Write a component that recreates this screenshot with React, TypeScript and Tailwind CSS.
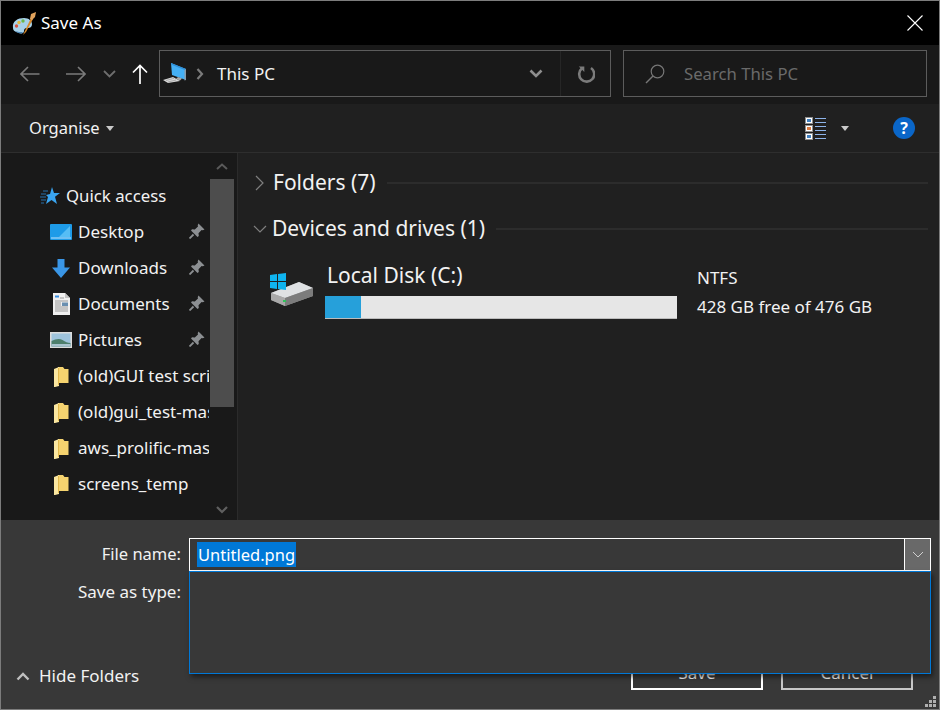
import React from "react";

const Palette = () => (
  <svg width="24" height="24" viewBox="0 0 24 24">
    <path d="M1 17C0 10 6 7 12 7c5 0 8 3 8 6 0 4-3 4-5 4-2 0-3 1-3 3 0 2-2 3-5 2-3-1-6-2-6-5z" fill="#a8d2ea" />
    <path d="M3 20c3 2 6 4 8 1-3 0-5 0-8-1z" fill="#4d87b5" />
    <circle cx="4.500" cy="15" r="1.700" fill="#d9533f" />
    <circle cx="7" cy="11.500" r="1.700" fill="#e2b93f" />
    <circle cx="11" cy="10" r="1.700" fill="#6cb84a" />
    <path d="M11 24l8-17 2 1-7 13z" fill="#d98a2c" />
    <path d="M18 8l1-5 5-2-1 5-3 3z" fill="#e2a35c" />
  </svg>
);

const Computer = () => (
  <svg width="26" height="24" viewBox="0 0 26 24">
    <path d="M8 1l15 6v11L9 13z" fill="#45b0f5" />
    <path d="M8 1l15 6v1.500L8 2.500z" fill="#2f8fd8" />
    <path d="M23 7v11l-1.500.5V8z" fill="#8a9aa8" />
    <path d="M15 15l4 1.500-2 2-4-1.500z" fill="#a8a8a8" />
    <path d="M0 18l10-3 7 4-12 2z" fill="#d8d8d8" />
    <path d="M3 18.500l8-2.200M5 20l8-2" stroke="#8a8a8a" strokeWidth=".6" />
  </svg>
);

const Pin = () => (
  <svg width="16" height="16" viewBox="0 0 16 16">
    <path d="M9.500 0.500L15.500 6.500L13.800 7.300L12.600 7L9.500 10.200L9.800 13L8.500 14L2 7.500L3 6.200L5.800 6.500L9 3.400L8.700 2.200z" fill="#8c8f92" />
    <path d="M4.500 11.500L0.500 15.500" stroke="#8c8f92" strokeWidth="1.800" />
  </svg>
);

const Star = () => (
  <svg width="20" height="18" viewBox="0 0 20 18">
    <path d="M12 0l2 6h6l-5 3.800 2 7.200-5.500-4-5.500 4 2-7-2-2 4-1z" fill="#3aa5f0" />
    <path d="M3 4h5M1 7h5M0 10h6M1 13h5M1 16h3" stroke="#2a85d0" strokeWidth=".8" />
  </svg>
);

const Desktop = () => (
  <svg width="22" height="16" viewBox="0 0 22 16">
    <rect width="22" height="16" rx="1" fill="#1e9be8" />
    <path d="M9 13L20 2v11z" fill="#56bdf5" />
    <rect x="1" y="13.500" width="20" height="1" fill="#bfe4fb" />
  </svg>
);

const Download = () => (
  <svg width="18" height="19" viewBox="0 0 18 19">
    <path d="M5.500 0h7v8.500H18L9 19 0 8.500h5.500z" fill="#3a96e6" />
  </svg>
);

const Doc = () => (
  <svg width="17" height="22" viewBox="0 0 17 22">
    <path d="M0 0h12l5 5v17H0z" fill="#f0f0f0" />
    <path d="M12 0l5 5h-5z" fill="#c2c2c2" />
    <path d="M2 3.500h4" stroke="#3a8fe0" strokeWidth="2" />
    <path d="M7 5h4M2 8h13M2 10h6M2 12h6M2 14h13M2 16h13M2 18h13" stroke="#9a9a9a" strokeWidth="1" />
    <rect x="9" y="9.500" width="6" height="3.500" fill="#6a8fb0" />
  </svg>
);

const Pic = () => (
  <svg width="22" height="16" viewBox="0 0 22 16">
    <rect width="22" height="16" fill="#dcdcdc" />
    <rect x="1.500" y="1.500" width="19" height="13" fill="#9ec3dc" />
    <path d="M1.500 9c4-2 8-3 11-1 3 2 5 3 8 3v3.500h-19z" fill="#4d7f6c" />
    <rect x="1.500" y="12" width="19" height="2.500" fill="#a9c4cf" />
  </svg>
);

const Folder = () => (
  <svg width="15" height="21" viewBox="0 0 15 21">
    <path d="M4 1h5l1.500 2H14.500v14H4z" fill="#f5d36f" />
    <path d="M0 3l5-2v19l-4 1H0z" fill="#fbe7a0" />
    <path d="M4.500 2v17" stroke="#e2b84a" strokeWidth="1" />
  </svg>
);

const Disk = () => (
  <svg width="46" height="36" viewBox="0 0 46 36">
    <path d="M2 22L30 11l14 6v8L16 35 2 29z" fill="#9a9a9a" />
    <path d="M2 22L30 11l14 6-28 10z" fill="#dfe1e3" />
    <path d="M2 22l14 5v8L2 29z" fill="#a9a9a9" />
    <path d="M16 27l28-10v8L16 35z" fill="#7c7c7c" />
    <rect x="14" y="29" width="3" height="2" fill="#2fc25a" />
    <path d="M1 4l7-1v7H1zM9 3l8-1v8H9zM1 11h7v7l-7-1zM9 11h8v8l-8-1z" fill="#0fb4f0" />
  </svg>
);

const ViewIcon = () => {
  const colors = ["#3f7fc0", "#d9793f", "#3f7fc0"];
  return (
    <svg width="21" height="23" viewBox="0 0 21 23">
      {colors.map((c, i) => (
        <g key={i} transform={`translate(0 ${i * 8})`}>
          <rect x=".500" y=".500" width="7" height="6" fill="#fff" stroke="#8e8e8e" />
          <rect x="2" y="2" width="4" height="3" fill={c} />
          <path d="M10 1.500h11M10 5.500h11" stroke="#8db4ea" strokeWidth="1" />
        </g>
      ))}
    </svg>
  );
};

const Caret = () => (
  <svg width="8" height="5" viewBox="0 0 8 5" className="shrink-0">
    <path d="M0 0h8L4 5z" fill="#c9c9c9" />
  </svg>
);

const SideRow = ({ icon, label, pin }: { icon: React.ReactNode; label: string; pin?: boolean }) => (
  <div className="h-9 flex items-center relative">
    <div className="w-[24px] ml-[48px] flex justify-center shrink-0">{icon}</div>
    <span className="ml-[5px] whitespace-nowrap text-[#f2f2f2]">{label}</span>
    {pin && (
      <div className="absolute left-[188px] top-[9px] bg-[#191919]">
        <Pin />
      </div>
    )}
  </div>
);

export default function App() {
  return (
    <div
      className="w-[940px] h-[710px] border border-[#7c7c7c] bg-[#202020] flex flex-col relative overflow-hidden text-white text-[17px]"
      style={{ fontFamily: '"Noto Sans", sans-serif' }}
    >
      {/* title */}
      <div className="h-[44px] bg-black flex items-center shrink-0 pl-[11px] pr-[16px]">
        <Palette />
        <span className="ml-[5px] text-white">Save As</span>
        <svg width="16" height="16" viewBox="0 0 16 16" className="ml-auto">
          <path d="M.5.500l15 15M15.500.500l-15 15" stroke="#fff" strokeWidth="1.100" />
        </svg>
      </div>

      {/* nav */}
      <div className="h-[59px] bg-[#191919] flex items-center shrink-0 pl-[19px] pb-[2px]">
        <svg width="20" height="16" viewBox="0 0 20 16">
          <path d="M19.500 8H1M8 1L1 8l7 7" stroke="#7b7b7b" strokeWidth="1.600" fill="none" />
        </svg>
        <svg width="20" height="16" viewBox="0 0 20 16" className="ml-[26px]">
          <path d="M0 8h18.500M12 1l7 7-7 7" stroke="#7b7b7b" strokeWidth="1.600" fill="none" />
        </svg>
        <svg width="13" height="8" viewBox="0 0 13 8" className="ml-[17px]">
          <path d="M1 1l5.500 5.500L12 1" stroke="#6e6e6e" strokeWidth="1.800" fill="none" />
        </svg>
        <svg width="16" height="20" viewBox="0 0 16 20" className="ml-[16px]">
          <path d="M8 20V1.500M1 8.500l7-7 7 7" stroke="#fff" strokeWidth="1.700" fill="none" />
        </svg>
        <div className="ml-[11px] w-[452px] h-[47px] border border-[#5c5c5c] flex items-center shrink-0">
          <div className="ml-[3px]">
            <Computer />
          </div>
          <svg width="8" height="12" viewBox="0 0 8 12" className="ml-[7px]">
            <path d="M1.500 1l4.500 5-4.500 5" stroke="#7b7b7b" strokeWidth="2.200" fill="none" />
          </svg>
          <span className="ml-[13px] text-[#f2f2f2]">This PC</span>
          <svg width="14" height="9" viewBox="0 0 14 9" className="ml-auto">
            <path d="M1.500 1.500L7 7l5.500-5.500" stroke="#8e8e8e" strokeWidth="2.600" fill="none" />
          </svg>
          <div className="ml-[17px] w-[50px] h-full border-l border-[#262626] flex items-center justify-center">
            <svg width="18" height="18" viewBox="0 0 18 18">
              <path d="M5 3.300A7.500 7.500 0 1 0 14 3" stroke="#7b7b7b" strokeWidth="2.600" fill="none" />
              <path d="M1.800 1.500h5.500V7z" fill="#7b7b7b" />
            </svg>
          </div>
        </div>
        <div className="ml-[12px] w-[304px] h-[47px] border border-[#5c5c5c] flex items-center shrink-0">
          <svg width="20" height="20" viewBox="0 0 20 20" className="ml-[21px]">
            <circle cx="12.500" cy="7.500" r="6.300" stroke="#777" strokeWidth="1.200" fill="none" />
            <path d="M8 12L1 19" stroke="#777" strokeWidth="1.400" />
          </svg>
          <span className="ml-[19px] text-[#6a6a6a] text-[16.700px]">Search This PC</span>
        </div>
      </div>

      {/* toolbar */}
      <div className="h-[48px] bg-[#202020] border-b border-[#2e2e2e] flex items-center shrink-0 pl-[28px] box-content">
        <span className="text-[#f2f2f2] text-[16.500px]">Organise</span>
        <div className="ml-[6px]">
          <Caret />
        </div>
        <div className="ml-auto flex items-center pr-[24px]">
          <ViewIcon />
          <div className="ml-[15px]">
            <Caret />
          </div>
          <div className="ml-[44px] w-[22px] h-[22px] rounded-full bg-[#0a66c8] flex items-center justify-center text-[16px] font-bold text-white leading-none">
            ?
          </div>
        </div>
      </div>

      {/* body */}
      <div className="flex-1 flex min-h-0">
        <div className="w-[237px] bg-[#191919] border-r border-[#2b2b2b] flex shrink-0">
          <div className="w-[208px] mr-[1px] overflow-hidden pt-[25px] relative shrink-0 text-[#f2f2f2]">
            <div className="h-9 flex items-center ml-[39px]">
              <Star />
              <span className="ml-[6px] whitespace-nowrap text-[16.800px]">Quick access</span>
            </div>
            <SideRow icon={<Desktop />} label="Desktop" pin />
            <SideRow icon={<Download />} label="Downloads" pin />
            <SideRow icon={<Doc />} label="Documents" pin />
            <SideRow icon={<Pic />} label="Pictures" pin />
            <SideRow icon={<Folder />} label="(old)GUI test scripts" />
            <SideRow icon={<Folder />} label="(old)gui_test-master" />
            <SideRow icon={<Folder />} label="aws_prolific-master" />
            <SideRow icon={<Folder />} label="screens_temp" />
          </div>
          <div className="w-[24px] flex flex-col items-center shrink-0">
            <div className="h-[26px] w-full flex items-center justify-center">
              <svg width="12" height="7" viewBox="0 0 12 7">
                <path d="M1 6l5-4.500L11 6" stroke="#5a5a5a" strokeWidth="2" fill="none" />
              </svg>
            </div>
            <div className="h-[228px] w-full bg-[#4d4d4d]" />
            <div className="flex-1 flex items-end pb-[6px]">
              <svg width="12" height="8" viewBox="0 0 12 8">
                <path d="M1 1l5 5 5-5" stroke="#5f5f5f" strokeWidth="2.200" fill="none" />
              </svg>
            </div>
          </div>
        </div>

        <div className="flex-1 bg-[#202020] pl-[15px] pr-[11px] pt-[13px] text-[#f2f2f2]">
          <div className="h-[34px] flex items-center">
            <svg width="9" height="16" viewBox="0 0 9 16" className="ml-[2px]">
              <path d="M1 1l7 7-7 7" stroke="#7f7f7f" strokeWidth="1.200" fill="none" />
            </svg>
            <span className="ml-[9px] text-[21px] leading-[30px] -mt-[2px]">Folders (7)</span>
            <div className="ml-[11px] flex-1 h-[2px] bg-[#2c2c2c]" />
          </div>
          <div className="h-[34px] mt-[12px] flex items-center">
            <svg width="14" height="8" viewBox="0 0 14 8" className="shrink-0">
              <path d="M1 1l6 6 6-6" stroke="#7f7f7f" strokeWidth="1.200" fill="none" />
            </svg>
            <span className="ml-[5px] text-[21px] leading-[30px] -mt-[2px] whitespace-nowrap">Devices and drives (1)</span>
            <div className="ml-[11px] flex-1 h-[2px] bg-[#2c2c2c]" />
          </div>
          <div className="flex mt-[14px] ml-[16px]">
            <div className="pt-[11px] w-[56px] shrink-0">
              <Disk />
            </div>
            <div className="w-[352px] shrink-0">
              <div className="text-[21px] h-[36px] leading-[31px] pl-[2px]">Local Disk (C:)</div>
              <div className="h-[23px] bg-[#e6e6e6] border-b border-[#bcbcbc] flex">
                <div className="w-[36px] h-full bg-[#26a0da]" />
              </div>
            </div>
            <div className="ml-[20px] pt-[3px] leading-[29px] whitespace-nowrap">
              <div>NTFS</div>
              <div>428 GB free of 476 GB</div>
            </div>
          </div>
        </div>
      </div>

      {/* footer */}
      <div className="h-[189px] bg-[#383838] shrink-0 flex flex-col pt-[18px] pb-[19px] text-[#f2f2f2]">
        <div className="flex items-center h-[33px]">
          <span className="w-[180px] text-right text-[16.500px]">File name:</span>
          <div className="ml-[8px] w-[742px] h-[33px] border border-white flex items-center pl-[7px]">
            <span className="bg-[#0078d7] text-white h-[25px] leading-[25px] px-[1px] text-[16.500px]">Untitled.png</span>
            <div className="ml-auto w-[26px] h-full bg-[#696969] border-l border-white flex items-center justify-center">
              <svg width="12" height="7" viewBox="0 0 12 7">
                <path d="M1 1l5 5 5-5" stroke="#cfcfcf" strokeWidth="1" fill="none" />
              </svg>
            </div>
          </div>
        </div>
        <div className="h-[42px] flex items-center">
          <span className="w-[180px] text-right">Save as type:</span>
        </div>
        <div className="mt-auto flex items-end pl-[15px] pr-[26px]">
          <div className="flex items-center h-[28px]">
            <svg width="14" height="9" viewBox="0 0 14 9">
              <path d="M1.500 7.500L7 2l5.500 5.500" stroke="#c0c0c0" strokeWidth="2.400" fill="none" />
            </svg>
            <span className="ml-[9px]">Hide Folders</span>
          </div>
          <div className="ml-auto flex gap-[18px]">
            <div className="w-[132px] h-[34px] border-2 border-white flex items-center justify-center">Save</div>
            <div className="w-[132px] h-[34px] border-2 border-[#c8c8c8] flex items-center justify-center">Cancel</div>
          </div>
        </div>
      </div>

      {/* open dropdown list over the footer */}
      <div className="absolute left-[188px] top-[570px] w-[742px] h-[103px] bg-[#383838] border border-[#0078d7] shadow-[2px_3px_5px_rgba(0,0,0,0.5)]" />

      {/* resize grip */}
      <svg width="12" height="12" viewBox="0 0 12 12" className="absolute right-[2px] bottom-[1px]">
        <path d="M8 0h3v3H8zM4 4h3v3H4zM8 4h3v3H8zM0 8h3v3H0zM4 8h3v3H4zM8 8h3v3H8z" fill="#b0b0b0" />
      </svg>
    </div>
  );
}
